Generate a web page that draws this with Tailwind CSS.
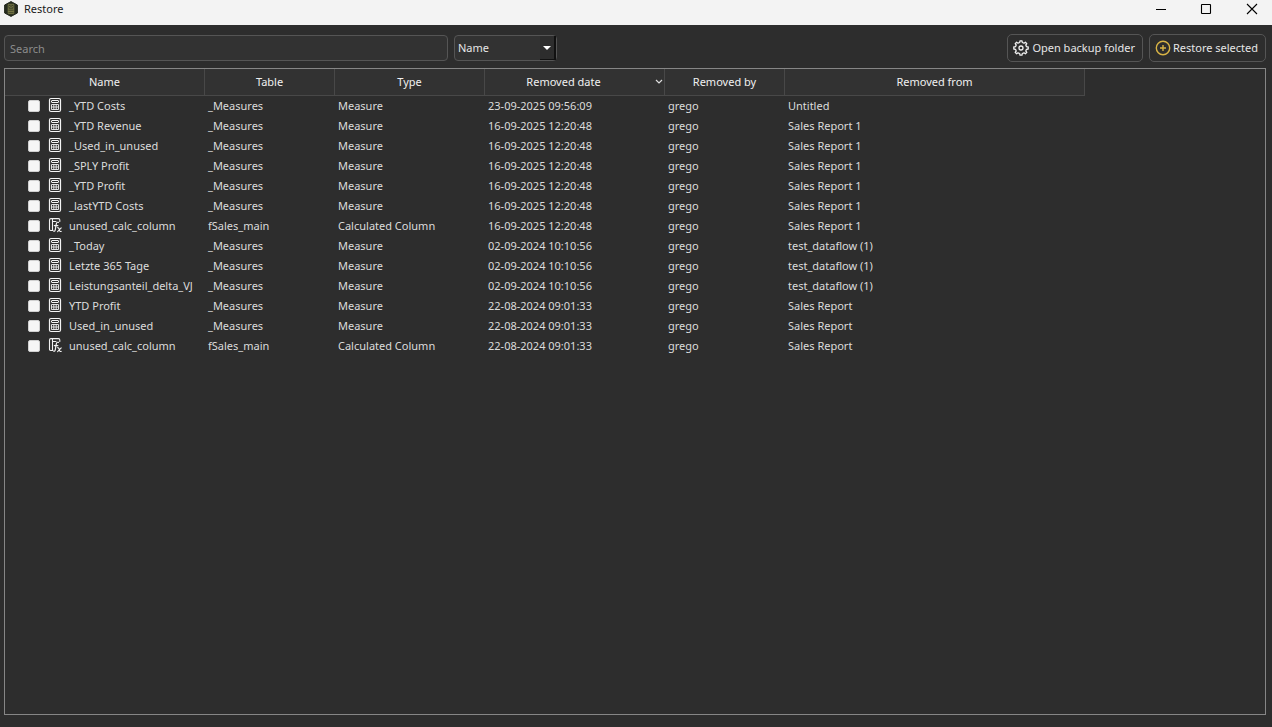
<!DOCTYPE html>
<html lang="en">
<head>
<meta charset="utf-8">
<meta name="viewport" content="width=device-width, initial-scale=1">
<title>Restore</title>
<script src="https://cdn.jsdelivr.net/npm/@tailwindcss/browser@4"></script>
</head>
<body class="flex h-screen flex-col overflow-hidden bg-[#2d2d2d] font-['Noto_Sans','Open_Sans',sans-serif] text-[11px] leading-4 text-[#e6e6e6]">
<svg class="hidden" aria-hidden="true">
  <symbol id="calc" viewBox="0 0 14 16">
    <g fill="none" stroke="#f4f4f4">
      <rect x="1.5" y="1.5" width="11" height="13" rx="1.5" stroke-width="1.2"/>
      <rect x="3.5" y="3.5" width="7" height="2" rx=".5"/>
      <path d="M3.5 7.5h7v5h-7zM3.5 10h7M5.8 7.5v5M8.2 7.5v5" stroke-width=".9"/>
    </g>
  </symbol>
  <symbol id="column" viewBox="0 0 14 16">
    <g fill="none" stroke="#f0f0f0" stroke-width="1.1" stroke-linecap="round">
      <path d="M5 13.5H2.7Q1.5 13.500 1.5 12.300V3Q1.500 1.600 2.900 1.600H10.500Q11.800 1.600 11.800 3V4.500M4.500 1.600V13.500M4.500 4.500H8"/>
      <path d="M10.500 5.400Q8.700 4.800 8.300 6.800L7.300 12.600Q6.900 14.600 5.700 14.200M6.300 8.600H9.900" stroke-width="1.200"/>
      <path d="M9.600 10.700Q10.500 10.400 11 11.800L11.600 13.600Q12 14.800 13.200 14.400M13.200 10.800L9.600 14.600"/>
    </g>
  </symbol>
</svg>

<header class="flex h-[25px] shrink-0 items-start justify-between bg-[#f3f3f3] text-[#1a1a1a]">
  <div class="flex items-center gap-[5px] pt-px pl-[3px]">
    <svg class="size-4" viewBox="0 0 16 16" aria-hidden="true">
      <path d="M8 .6L14.4 4v8L8 15.4 1.6 12V4z" fill="#252a1e" stroke="#252a1e" stroke-linejoin="round"/>
      <path d="M5.2 3.3h5.6v9.4H5.2zM6.6 4.9h2.8v1.4H6.6zM5.2 8h5.6M5.2 10.4h5.6M7 8v4.7M9 8v4.7" fill="none" stroke="#89894f" stroke-width=".8"/>
    </svg>
    <h1>Restore</h1>
  </div>
  <div class="flex">
    <button aria-label="Minimize" class="grid h-[18px] w-11 place-items-center"><svg class="size-3" viewBox="0 0 12 12"><path d="M1 6.500h10" stroke="#000"/></svg></button>
    <button aria-label="Maximize" class="grid h-[18px] w-[46px] place-items-center"><svg class="size-3" viewBox="0 0 12 12"><rect x="1.500" y="1.500" width="9" height="9" rx=".5" fill="none" stroke="#000" stroke-width="1.100"/></svg></button>
    <button aria-label="Close" class="ml-[3px] grid h-[18px] w-10 place-items-center"><svg class="size-3" viewBox="0 0 12 12"><path d="M1 1l10 10M11 1L1 11" stroke="#000" stroke-width="1.100"/></svg></button>
  </div>
</header>

<main class="flex min-h-0 flex-1 flex-col gap-[6px] pt-[9px] pr-[6px] pb-3 pl-1">
  <div class="flex h-7 shrink-0 items-center gap-[6px]">
    <input type="text" aria-label="Search" placeholder="Search" class="h-[26px] w-[444px] rounded-[4px] border border-[#555] bg-[#323232] px-[5px] placeholder:text-[#8c8c8c]">
    <div class="relative h-[26px] w-[103px]">
      <select aria-label="Search field" class="size-full appearance-none rounded-[4px] border border-[#555] bg-[#323232] pl-[3px]"><option>Name</option><option>Table</option><option>Type</option></select>
      <span class="pointer-events-none absolute top-px right-px bottom-px grid w-4 place-items-center border-r-2 border-b border-[#111] bg-[#2d2d2d]"><svg class="h-1 w-2" viewBox="0 0 8 4"><path d="M0 0h8L4 4z" fill="#fff"/></svg></span>
    </div>
    <button class="ml-auto flex h-7 items-center gap-[3px] rounded-[5px] border border-[#555] pr-[7px] pl-[5px]">
      <svg class="size-4" viewBox="0 0 16 16" fill="none" stroke="#f0f0f0" stroke-width="1.300" stroke-linejoin="round" aria-hidden="true"><path d="M6.700 2.500L7 .8h2l.3 1.700 1.700.7 1.400-1L13.800 3.600l-1 1.400.7 1.700 1.700.3v2l-1.700.3-.7 1.700 1 1.400-1.400 1.400-1.400-1-1.700.7-.3 1.700H7l-.3-1.700-1.700-.7-1.400 1-1.400-1.400 1-1.400-.7-1.700L.8 9V7l1.700-.3.7-1.700-1-1.400 1.400-1.400 1.400 1z"/><circle cx="8" cy="8" r="2"/></svg>
      <span>Open backup folder</span>
    </button>
    <button class="flex h-7 items-center gap-[2px] rounded-[5px] border border-[#555] pr-[7px] pl-[5px]">
      <svg class="size-4" viewBox="0 0 16 16" fill="none" stroke="#d9b445" aria-hidden="true"><circle cx="8" cy="8" r="6.700" stroke-width="1.400"/><path d="M8 5v6M5 8h6" stroke-width="1.400"/></svg>
      <span>Restore selected</span>
    </button>
  </div>

  <div class="min-h-0 flex-1 overflow-auto border border-[#868686]">
    <table class="w-[1080px] table-fixed border-separate border-spacing-0 text-[#dcdcdc] [&_input]:size-3 [&_input]:shrink-0 [&_input]:appearance-none [&_input]:rounded-[2px] [&_input]:border [&_input]:border-[#d0d0d0] [&_input]:bg-[#f6f6f6] [&_input]:checked:bg-[#d9b445] [&_label]:flex [&_label]:h-5 [&_label]:items-center [&_label]:whitespace-nowrap [&_label]:pl-5 [&_svg.i]:mr-[7px] [&_svg.i]:mb-[2px] [&_svg.i]:ml-2 [&_svg.i]:h-4 [&_svg.i]:w-[14px] [&_svg.i]:shrink-0 [&_tbody_td]:h-5 [&_tbody_td]:px-[3px] [&_tbody_td]:py-0 [&_th]:h-[27px] [&_th]:border-r [&_th]:border-b [&_th]:border-[#484848] [&_th]:bg-[#323232] [&_th]:p-0 [&_th]:font-normal [&_th]:text-[#f0f0f0]">
      <colgroup><col class="w-[200px]"><col class="w-[130px]"><col class="w-[150px]"><col class="w-[180px]"><col class="w-[120px]"><col class="w-[300px]"></colgroup>
      <thead><tr>
        <th>Name</th><th>Table</th><th>Type</th>
        <th aria-sort="descending"><div class="flex items-center"><span class="flex-1 pr-[13px]">Removed date</span><svg class="mr-px size-2" viewBox="0 0 8 8" aria-hidden="true"><path d="M1 2l3 3 3-3" fill="none" stroke="#ddd" stroke-width="1.200"/></svg></div></th>
        <th>Removed by</th><th>Removed from</th>
      </tr></thead>
      <tbody>
        <tr><td><label><input type="checkbox"><svg class="i"><use href="#calc"/></svg>_YTD Costs</label></td><td>_Measures</td><td>Measure</td><td>23-09-2025 09:56:09</td><td>grego</td><td>Untitled</td></tr>
        <tr><td><label><input type="checkbox"><svg class="i"><use href="#calc"/></svg>_YTD Revenue</label></td><td>_Measures</td><td>Measure</td><td>16-09-2025 12:20:48</td><td>grego</td><td>Sales Report 1</td></tr>
        <tr><td><label><input type="checkbox"><svg class="i"><use href="#calc"/></svg>_Used_in_unused</label></td><td>_Measures</td><td>Measure</td><td>16-09-2025 12:20:48</td><td>grego</td><td>Sales Report 1</td></tr>
        <tr><td><label><input type="checkbox"><svg class="i"><use href="#calc"/></svg>_SPLY Profit</label></td><td>_Measures</td><td>Measure</td><td>16-09-2025 12:20:48</td><td>grego</td><td>Sales Report 1</td></tr>
        <tr><td><label><input type="checkbox"><svg class="i"><use href="#calc"/></svg>_YTD Profit</label></td><td>_Measures</td><td>Measure</td><td>16-09-2025 12:20:48</td><td>grego</td><td>Sales Report 1</td></tr>
        <tr><td><label><input type="checkbox"><svg class="i"><use href="#calc"/></svg>_lastYTD Costs</label></td><td>_Measures</td><td>Measure</td><td>16-09-2025 12:20:48</td><td>grego</td><td>Sales Report 1</td></tr>
        <tr><td><label><input type="checkbox"><svg class="i"><use href="#column"/></svg>unused_calc_column</label></td><td>fSales_main</td><td>Calculated Column</td><td>16-09-2025 12:20:48</td><td>grego</td><td>Sales Report 1</td></tr>
        <tr><td><label><input type="checkbox"><svg class="i"><use href="#calc"/></svg>_Today</label></td><td>_Measures</td><td>Measure</td><td>02-09-2024 10:10:56</td><td>grego</td><td>test_dataflow (1)</td></tr>
        <tr><td><label><input type="checkbox"><svg class="i"><use href="#calc"/></svg>Letzte 365 Tage</label></td><td>_Measures</td><td>Measure</td><td>02-09-2024 10:10:56</td><td>grego</td><td>test_dataflow (1)</td></tr>
        <tr><td><label><input type="checkbox"><svg class="i"><use href="#calc"/></svg>Leistungsanteil_delta_VJ</label></td><td>_Measures</td><td>Measure</td><td>02-09-2024 10:10:56</td><td>grego</td><td>test_dataflow (1)</td></tr>
        <tr><td><label><input type="checkbox"><svg class="i"><use href="#calc"/></svg>YTD Profit</label></td><td>_Measures</td><td>Measure</td><td>22-08-2024 09:01:33</td><td>grego</td><td>Sales Report</td></tr>
        <tr><td><label><input type="checkbox"><svg class="i"><use href="#calc"/></svg>Used_in_unused</label></td><td>_Measures</td><td>Measure</td><td>22-08-2024 09:01:33</td><td>grego</td><td>Sales Report</td></tr>
        <tr><td><label><input type="checkbox"><svg class="i"><use href="#column"/></svg>unused_calc_column</label></td><td>fSales_main</td><td>Calculated Column</td><td>22-08-2024 09:01:33</td><td>grego</td><td>Sales Report</td></tr>
      </tbody>
    </table>
  </div>
</main>
</body>
</html>
